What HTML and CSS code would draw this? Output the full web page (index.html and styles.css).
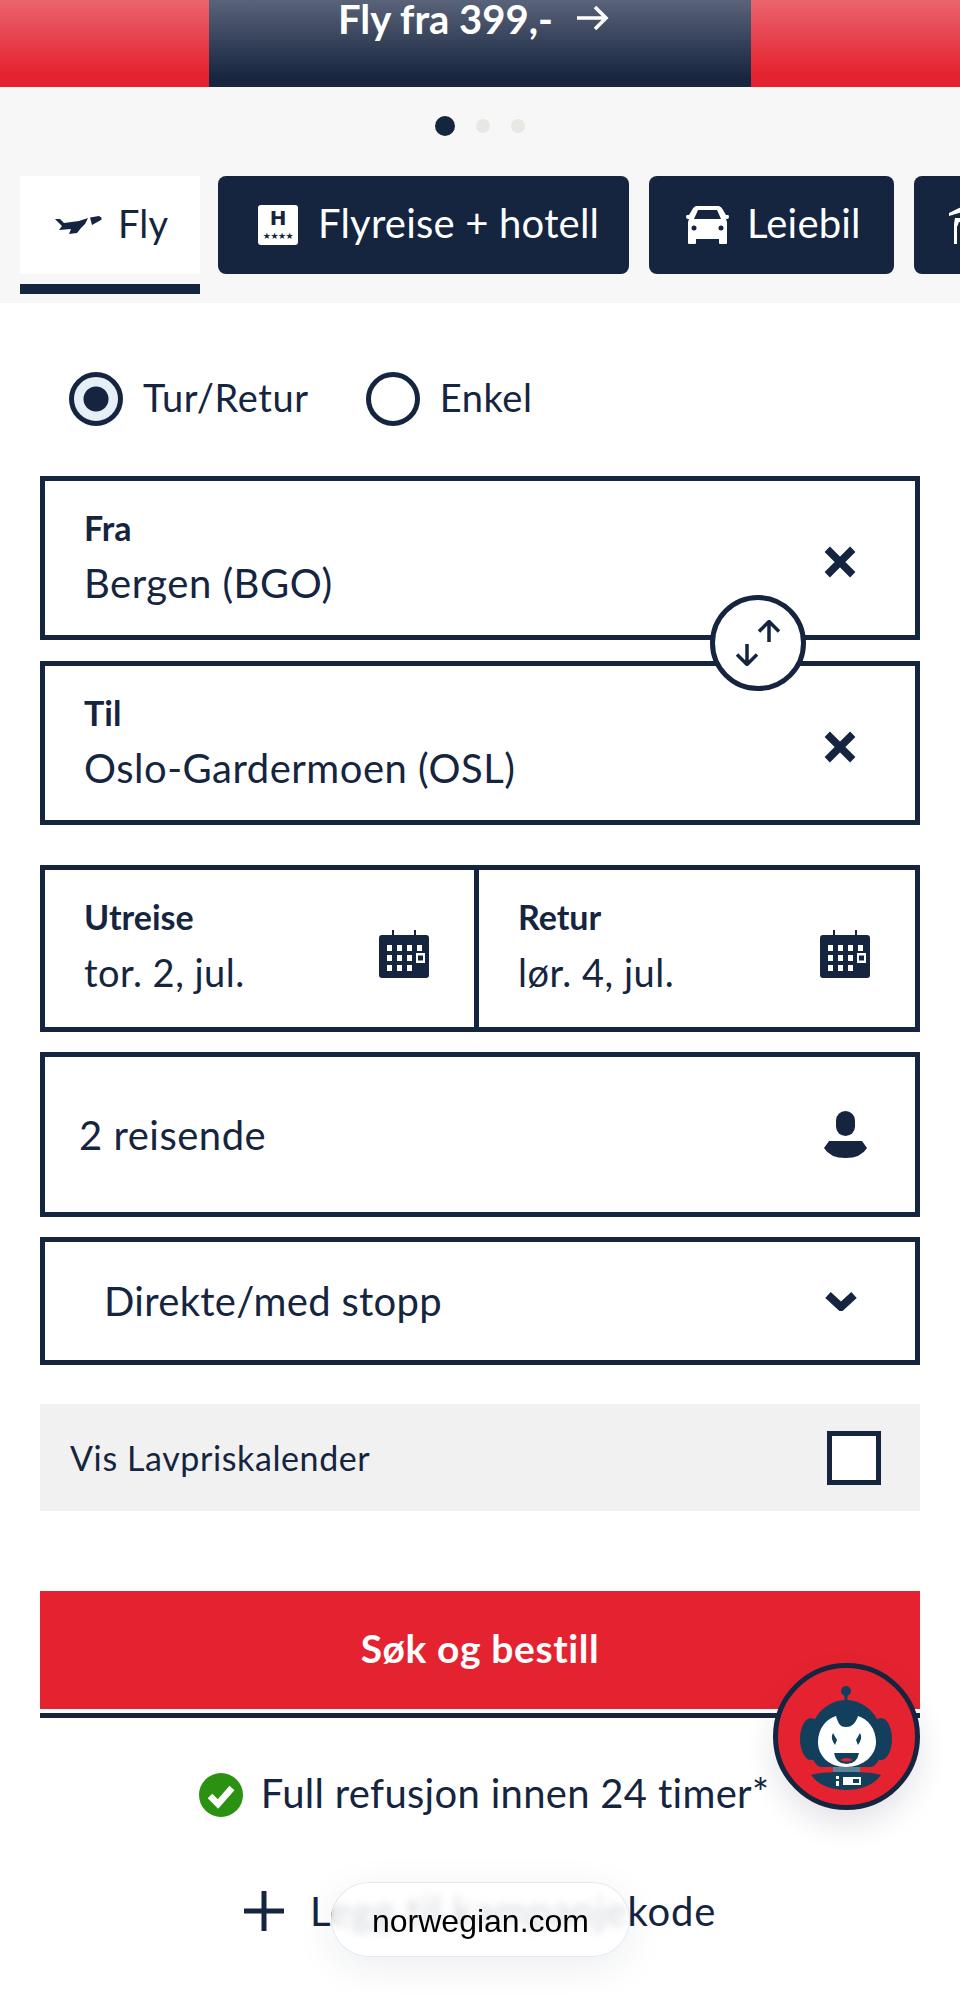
FILE: index.html
```html
<!DOCTYPE html>
<html lang="no">
<head>
    <meta charset="UTF-8">
    <meta name="viewport" content="width=device-width, initial-scale=1.0">
    <title>Norwegian</title>
    <link rel="stylesheet" href="styles.css">
</head>
<body>
    <div class="page">
        <div class="banner">
            <div class="promo">
                <span>Fly fra 399,-</span>
                <svg class="promo-arrow" viewBox="0 0 34 28"><path d="M1 14h30M19 3l11 11-11 11" fill="none" stroke="#fff" stroke-width="3.6"/></svg>
            </div>
        </div>

        <div class="top-area">
            <div class="dots">
                <span class="dot active"></span>
                <span class="dot"></span>
                <span class="dot"></span>
            </div>
            <div class="tabs">
                <div class="tab-wrap">
                    <div class="tab active">
                        <svg class="plane" viewBox="0 0 47 18"><path d="M0 3h5l4 4 15-2 9-3-3 6-4 4-4 5-8 1 2-5-12 1 3-4zM35 1.500 44 0q4 2 2 4l-9 5z" fill="#15243f"/></svg>
                        <span>Fly</span>
                    </div>
                </div>
                <div class="tab tab-hotel">
                    <div class="hotel-icon"><span class="hotel-h">H</span><span class="hotel-stars">★★★★</span></div>
                    <span>Flyreise + hotell</span>
                </div>
                <div class="tab tab-car">
                    <svg class="car" viewBox="0 0 43 38"><path d="M11 0h21q3 0 5 4l3 5h2q1 0 1 2t-2 2h-1l1 3v21q0 1-1 1h-6q-1 0-1-1v-4H10v4q0 1-1 1H3q-1 0-1-1V16l1-3H2q-2 0-2-2t1-2h2l3-5q2-4 5-4z" fill="#fff"/><path d="M12 4h19l4 9H8z" fill="#15243f"/><circle cx="8" cy="22" r="2.500" fill="#15243f"/><circle cx="35" cy="22" r="2.500" fill="#15243f"/></svg>
                    <span>Leiebil</span>
                </div>
                <div class="tab tab-last">
                    <svg class="cut-icon" viewBox="0 0 20 38"><path d="M0 7 10 2l10-2v4L10 7 0 10zM6 12h14v4H10l-2 5v17H5V18z" fill="#fff"/></svg>
                </div>
            </div>
        </div>

        <div class="form">
            <div class="trip-type">
                <div class="radio-item">
                    <span class="radio checked"></span>
                    <span class="radio-text">Tur/Retur</span>
                </div>
                <div class="radio-item">
                    <span class="radio"></span>
                    <span class="radio-text">Enkel</span>
                </div>
            </div>

            <div class="route">
                <div class="field">
                    <div>
                        <div class="field-label">Fra</div>
                        <div class="field-value route-value">Bergen (BGO)</div>
                    </div>
                    <svg class="clear" viewBox="0 0 32 32"><path d="M4 4l24 24M28 4 4 28" stroke="#15243f" stroke-width="7"/></svg>
                </div>
                <div class="field">
                    <div>
                        <div class="field-label">Til</div>
                        <div class="field-value route-value">Oslo-Gardermoen (OSL)</div>
                    </div>
                    <svg class="clear" viewBox="0 0 32 32"><path d="M4 4l24 24M28 4 4 28" stroke="#15243f" stroke-width="7"/></svg>
                </div>
                <div class="swap">
                    <svg viewBox="0 0 46 46"><path d="M34 22V3M24 11.500l10-10 10 10M12 24v19M2 34.500l10 10 10-10" fill="none" stroke="#15243f" stroke-width="3.500"/></svg>
                </div>
            </div>

            <div class="dates">
                <div class="date">
                    <div class="date-text">
                        <div class="field-label">Utreise</div>
                        <div class="field-value">tor. 2, jul.</div>
                    </div>
                    <svg class="calendar" viewBox="0 0 50 48"><use href="#cal"/></svg>
                </div>
                <div class="date date-return">
                    <div class="date-text">
                        <div class="field-label">Retur</div>
                        <div class="field-value">lør. 4, jul.</div>
                    </div>
                    <svg class="calendar" viewBox="0 0 50 48"><use href="#cal"/></svg>
                </div>
            </div>

            <div class="passengers">
                <span>2 reisende</span>
                <svg class="person" viewBox="0 0 43 47"><rect x="12" y="0" width="19" height="25" rx="9.500" fill="#15243f"/><path d="M5 30h33l5 7q-6 10-21.500 10T0 37z" fill="#15243f"/></svg>
            </div>

            <div class="stops">
                <span>Direkte/med stopp</span>
                <svg class="chevron" viewBox="0 0 32 20"><path d="M3 4l13 12L29 4" fill="none" stroke="#15243f" stroke-width="8"/></svg>
            </div>

            <div class="lowfare">
                <span>Vis Lavpriskalender</span>
                <span class="checkbox"></span>
            </div>

            <div class="search-btn">Søk og bestill</div>
            <div class="search-line"></div>

            <div class="refund">
                <svg class="check" viewBox="0 0 44 44"><circle cx="22" cy="22" r="22" fill="#2a9113"/><path d="M11 23l8 8 14-16" fill="none" stroke="#fff" stroke-width="6.500"/></svg>
                <span>Full refusjon innen 24 timer*</span>
            </div>

            <div class="promo-code">
                <svg class="plus" viewBox="0 0 40 40"><path d="M20 0v40M0 20h40" stroke="#15243f" stroke-width="5"/></svg>
                <span>Legg til kampanjekode</span>
            </div>
        </div>

        <div class="robot">
            <svg viewBox="0 0 147 147">
                <circle cx="73.500" cy="73.500" r="71" fill="#e52330" stroke="#15243f" stroke-width="5"/>
                <circle cx="73" cy="28" r="5" fill="#123f5c"/>
                <path d="M71.500 30h3v10h-3z" fill="#123f5c"/>
                <ellipse cx="38" cy="76" rx="11" ry="21" fill="#123f5c"/>
                <ellipse cx="108" cy="76" rx="11" ry="21" fill="#123f5c"/>
                <path d="M73 37c20 0 37 18 37 42 0 14-7 25-12 25H48c-5 0-12-11-12-25 0-24 17-42 37-42z" fill="#123f5c"/>
                <path d="M73 64c7 0 10-5 12-11 10 3 18 13 18 26 0 13-12 25-30 25S45 92 45 79c0-13 8-23 18-26 2 6 3 11 10 11z" fill="#fff"/>
                <path d="M60 70q-3 5 2 12l2-5zM87 70q3 5-2 12l-2-5z" fill="#123f5c"/>
                <path d="M61 90h25q-2 11-12.500 11T61 90z" fill="#123f5c"/>
                <path d="M67 97q6-4 13 0-6 3-13 0z" fill="#e52330"/>
                <path d="M60 104h27v5H60z" fill="#5d8495"/>
                <path d="M38 112c9-3 22-3 35-3s26 0 35 3c-7 10-20 15-35 15s-28-5-35-15z" fill="#123f5c"/>
                <path d="M63 113h3v3h-3zM63 118h3v5h-3zM70 114h18v8H70z" fill="#fff"/>
                <path d="M80 116h6v4h-6z" fill="#123f5c"/>
            </svg>
        </div>

        <div class="url-pill">norwegian.com</div>
    </div>

    <svg class="defs" width="0" height="0">
        <symbol id="cal" viewBox="0 0 50 48">
            <path d="M3 5h10V0h2v5h20V0h2v5h10q3 0 3 3v37q0 3-3 3H3q-3 0-3-3V8q0-3 3-3z" fill="#15243f"/>
            <path d="M8 15h5v6H8zM18 15h5v6h-5zM28 15h5v6h-5zM38 15h5v6h-5zM8 25h5v6H8zM18 25h5v6h-5zM28 25h5v6h-5zM8 35h5v6H8zM18 35h5v6h-5zM28 35h5v6h-5z" fill="#fff"/>
            <path d="M37 23h9v10h-9z" fill="#fff"/>
            <path d="M39 25.500h5v5h-5z" fill="#15243f"/>
        </symbol>
    </svg>
</body>
</html>
```

FILE: styles.css
```css
* {
    box-sizing: border-box;
}
body {
    margin: 0;
    font-family: "Lato", "Liberation Sans", sans-serif;
    background: #fff;
    color: #15243f;
}
.page {
    position: relative;
    width: 960px;
    height: 1993px;
    overflow: hidden;
}
.defs {
    position: absolute;
}

/* top banner */
.banner {
    display: flex;
    justify-content: center;
    height: 87px;
    background: linear-gradient(#ea646d, #e52330 85%);
}
.promo {
    display: flex;
    justify-content: center;
    align-items: flex-start;
    gap: 23px;
    width: 542px;
    padding-right: 12px;
    background: linear-gradient(#596379, #17253f 90%);
    color: #fff;
    font-size: 40px;
    font-weight: 700;
    line-height: 38px;
}
.promo-arrow {
    width: 34px;
    height: 28px;
    margin-top: 4px;
}

/* grey area with dots and tabs */
.top-area {
    height: 216px;
    background: #f7f7f7;
}
.dots {
    display: flex;
    justify-content: center;
    align-items: center;
    gap: 21px;
    height: 78px;
}
.dot {
    width: 14px;
    height: 14px;
    border-radius: 50%;
    background: #e9e7e3;
}
.dot.active {
    width: 20px;
    height: 20px;
    background: #15243f;
}
.tabs {
    display: flex;
    gap: 20px;
    padding: 11px 0 0 20px;
    margin-right: -100px;
}
.tab {
    display: flex;
    align-items: center;
    flex-shrink: 0;
    height: 98px;
    background: #15243f;
    border-radius: 8px;
    color: #fff;
    font-size: 40px;
    letter-spacing: 0.2px;
}
.tab > span {
    margin-top: -4px;
}
.tab-wrap {
    flex-shrink: 0;
    width: 180px;
    height: 118px;
    margin-right: -2px;
    border-bottom: 10px solid #15243f;
}
.tab.active {
    width: 180px;
    gap: 16px;
    padding: 0 0 0 35px;
    background: #fff;
    border-radius: 0;
    color: #15243f;
    font-size: 38px;
}
.tab-hotel {
    gap: 20px;
    width: 411px;
    padding-left: 40px;
}
.tab-car {
    gap: 18px;
    width: 245px;
    padding-left: 37px;
}
.tab-last {
    width: 120px;
    padding: 0 0 0 35px;
}
.plane {
    width: 47px;
    height: 18px;
}
.hotel-icon {
    display: flex;
    flex-direction: column;
    align-items: center;
    width: 40px;
    height: 40px;
    background: #fff;
    border-radius: 3px;
    color: #15243f;
}
.hotel-h {
    font-family: "DejaVu Sans", sans-serif;
    font-size: 20px;
    font-weight: 700;
    line-height: 27px;
    letter-spacing: 0;
}
.hotel-stars {
    font-family: "DejaVu Sans", sans-serif;
    font-size: 9px;
    line-height: 9px;
    letter-spacing: -0.5px;
}
.car {
    width: 43px;
    height: 38px;
}
.cut-icon {
    width: 20px;
    height: 38px;
}

/* search form */
.form {
    padding: 0 40px;
}
.trip-type {
    display: flex;
    gap: 57px;
    align-items: center;
    height: 173px;
    padding: 18px 0 0 29px;
}
.radio-item {
    display: flex;
    align-items: center;
    gap: 20px;
    font-size: 38px;
    letter-spacing: 0.6px;
}
.radio-text {
    margin-top: -3px;
}
.radio {
    display: block;
    width: 54px;
    height: 54px;
    border: 5px solid #15243f;
    border-radius: 50%;
    background: #fff;
}
.radio.checked {
    background: radial-gradient(circle, #15243f 12px, #e6eef8 13px);
}
.route {
    position: relative;
    display: flex;
    flex-direction: column;
    gap: 21px;
}
.field, .date, .passengers, .stops {
    display: flex;
    justify-content: space-between;
    align-items: center;
    border: 5px solid #15243f;
    background: #fff;
}
.field {
    height: 164px;
    padding: 0 58px 0 39px;
}
.field > div {
    margin-top: -5px;
}
.field-label {
    font-size: 34px;
    font-weight: 700;
    line-height: 40px;
}
.field-value {
    margin-top: 14px;
    font-size: 38px;
    line-height: 42px;
    letter-spacing: 0.5px;
}
.route-value {
    font-size: 40px;
}
.clear {
    width: 34px;
    height: 34px;
    margin-top: 8px;
}
.swap {
    position: absolute;
    left: 670px;
    top: 119px;
    display: flex;
    justify-content: center;
    align-items: center;
    width: 96px;
    height: 96px;
    border: 5px solid #15243f;
    border-radius: 50%;
    background: #fff;
}
.swap svg {
    width: 46px;
    height: 46px;
}
.dates {
    display: flex;
    height: 167px;
    margin-top: 40px;
}
.date {
    width: 439px;
    padding: 0 45px 0 39px;
}
.date-return {
    width: 441px;
    border-left: 0;
    padding: 0 45px 0 39px;
}
.date-text {
    margin-top: -8px;
}
.calendar {
    width: 50px;
    height: 50px;
    margin-top: 11px;
}
.passengers {
    height: 165px;
    margin-top: 20px;
    padding: 0 48px 0 34px;
    font-size: 40px;
    letter-spacing: 0.5px;
}
.person {
    width: 43px;
    height: 47px;
}
.stops {
    height: 128px;
    margin-top: 20px;
    padding: 0 58px 0 59px;
    font-size: 40px;
    letter-spacing: 0.3px;
}
.chevron {
    width: 32px;
    height: 20px;
}
.lowfare {
    display: flex;
    justify-content: space-between;
    align-items: center;
    height: 107px;
    margin-top: 39px;
    padding: 0 39px 0 30px;
    background: #f1f1f1;
    font-size: 34px;
    letter-spacing: 0.6px;
}
.checkbox {
    width: 54px;
    height: 54px;
    border: 5px solid #15243f;
    background: #fff;
}
.search-btn {
    display: flex;
    justify-content: center;
    align-items: center;
    height: 118px;
    margin-top: 80px;
    padding-bottom: 4px;
    background: #e52330;
    color: #fff;
    font-size: 39px;
    font-weight: 700;
    letter-spacing: 0.6px;
}
.search-line {
    height: 5px;
    margin-top: 4px;
    background: #15243f;
}
.refund {
    display: flex;
    justify-content: center;
    align-items: center;
    gap: 18px;
    height: 44px;
    margin-top: 55px;
    padding-left: 8px;
    font-size: 40px;
    letter-spacing: 0.3px;
}
.refund span {
    margin-top: -4px;
}
.check {
    width: 44px;
    height: 44px;
}
.promo-code {
    display: flex;
    justify-content: center;
    align-items: center;
    gap: 26px;
    height: 40px;
    margin-top: 74px;
    font-size: 40px;
    letter-spacing: 0.8px;
}
.plus {
    width: 40px;
    height: 40px;
}

/* overlays */
.robot {
    position: absolute;
    left: 773px;
    top: 1663px;
    width: 147px;
    height: 147px;
    border-radius: 50%;
    box-shadow: 0 14px 30px rgba(21, 36, 63, 0.12);
}
.robot svg {
    display: block;
}
.url-pill {
    position: absolute;
    left: 331px;
    top: 1882px;
    display: flex;
    justify-content: center;
    align-items: center;
    width: 299px;
    height: 75px;
    padding-top: 4px;
    border-radius: 38px;
    border: 1px solid rgba(220, 228, 240, 0.8);
    background: rgba(255, 255, 255, 0.82);
    backdrop-filter: blur(4px);
    box-shadow: 0 10px 40px rgba(21, 36, 63, 0.08);
    color: #000;
    font-family: "Liberation Sans", Arial, sans-serif;
    font-size: 32px;
}
```
